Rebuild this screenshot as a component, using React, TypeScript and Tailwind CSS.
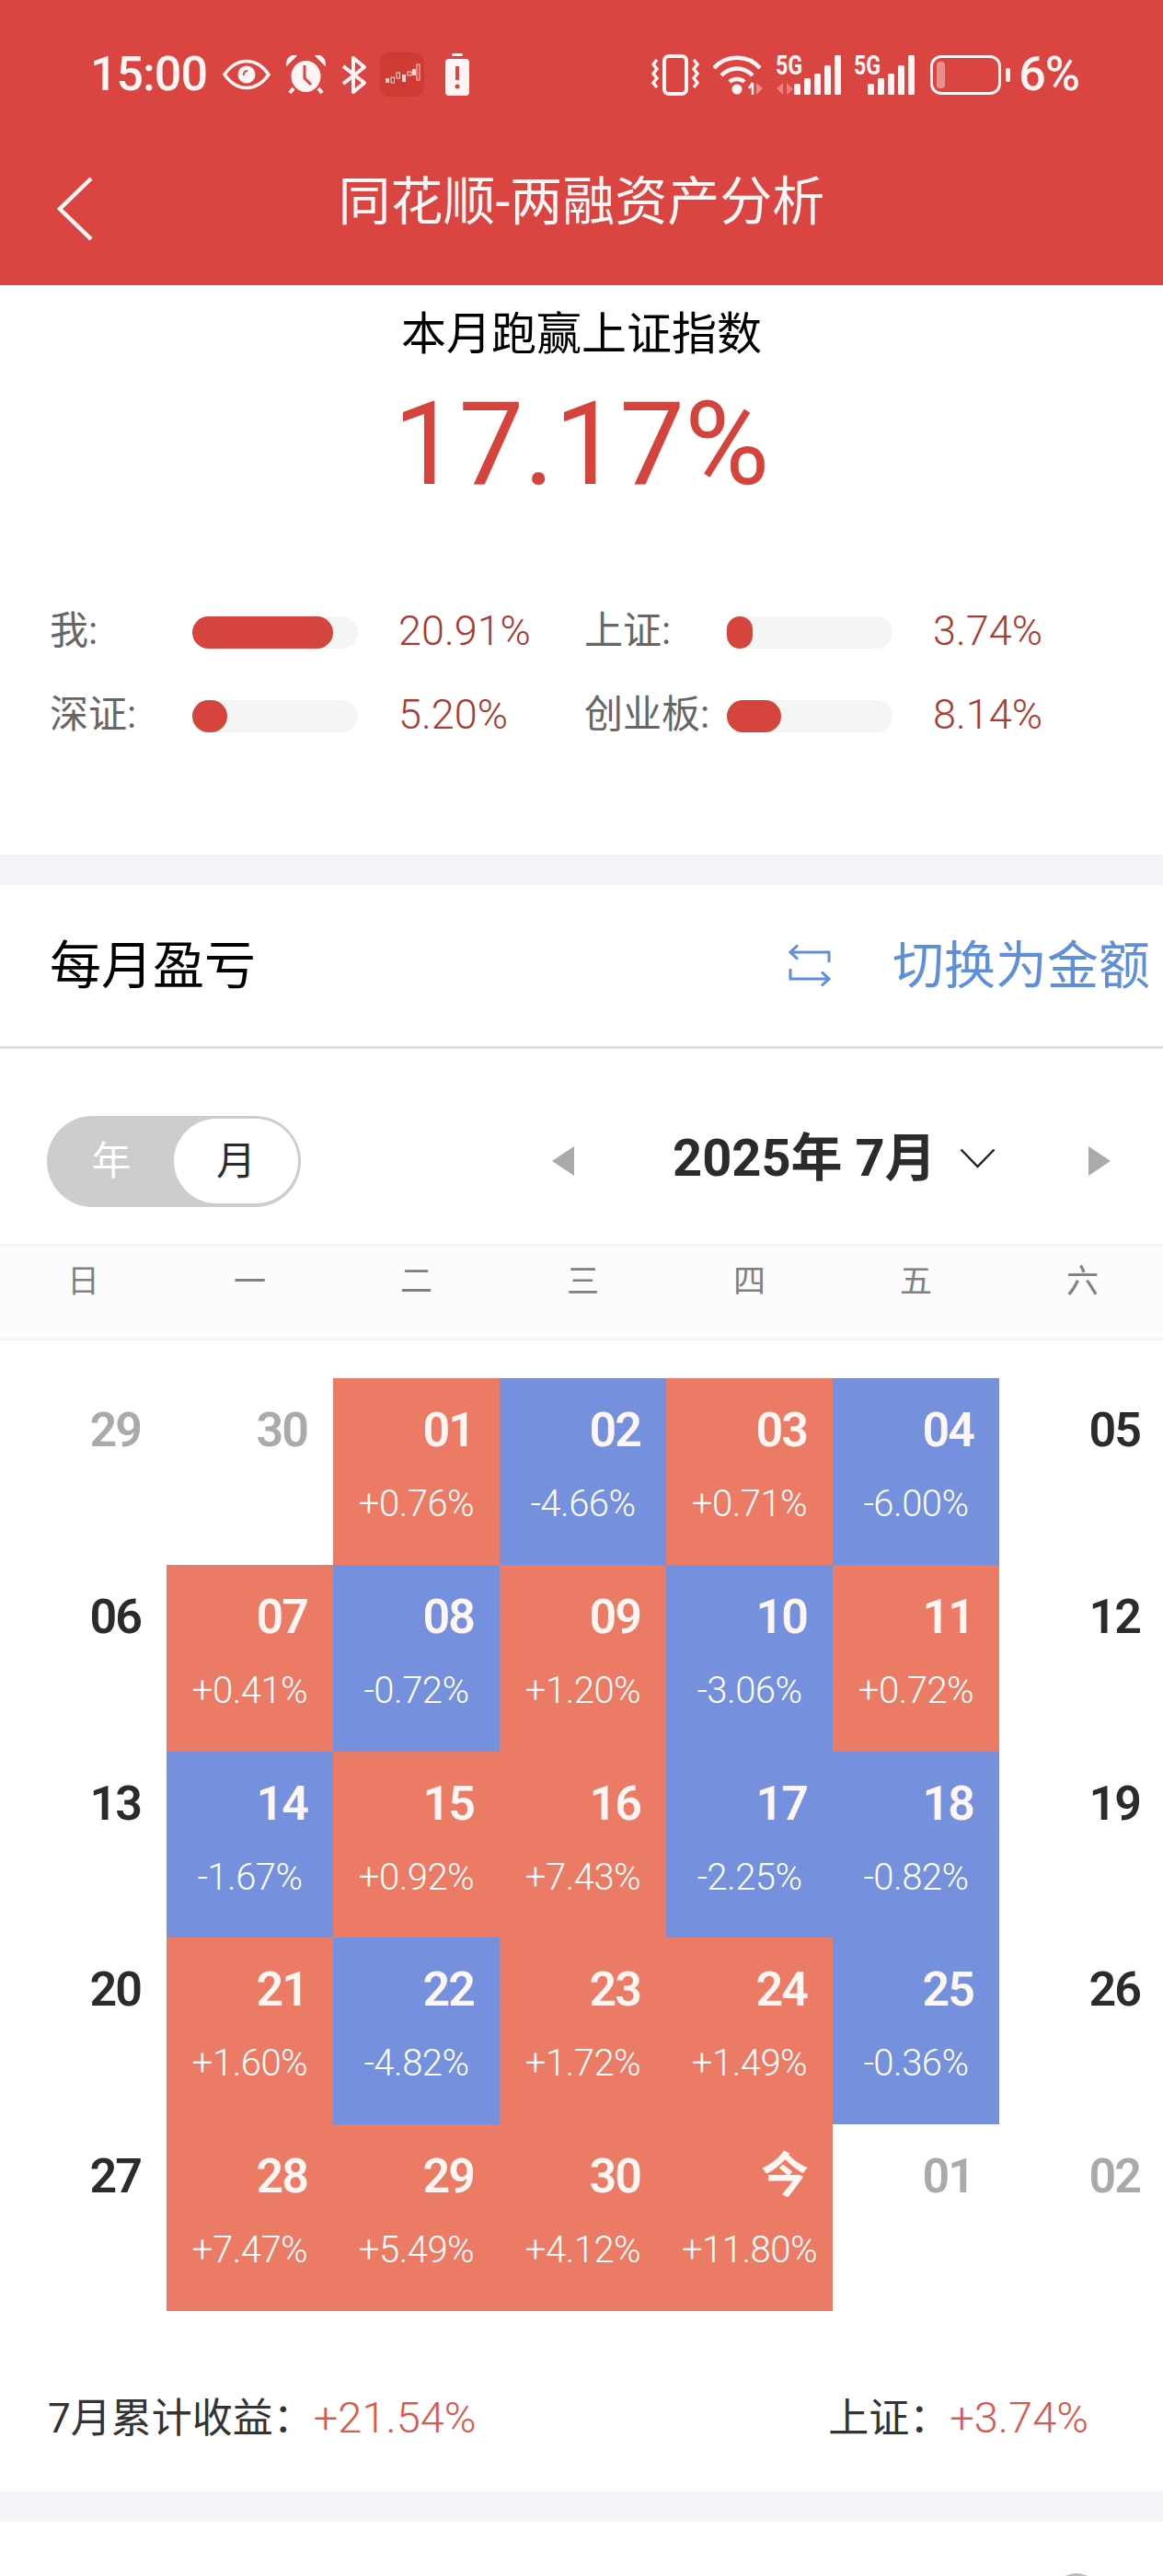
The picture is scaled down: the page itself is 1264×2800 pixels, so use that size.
import React from "react";

const FONT = "font-['Roboto','Noto_Sans_CJK_SC',sans-serif]";
const ICON = "#fff5f4";

type Cell = { day: string; pct?: string; tone: "up" | "down" | "none" | "muted" };

const c = (day: string, pct: string): Cell => ({
  day,
  pct,
  tone: pct.startsWith("+") ? "up" : "down",
});
const none = (day: string): Cell => ({ day, tone: "none" });
const muted = (day: string): Cell => ({ day, tone: "muted" });

const CELLS: Cell[] = [
  muted("29"), muted("30"), c("01", "+0.76%"), c("02", "-4.66%"), c("03", "+0.71%"), c("04", "-6.00%"), none("05"),
  none("06"), c("07", "+0.41%"), c("08", "-0.72%"), c("09", "+1.20%"), c("10", "-3.06%"), c("11", "+0.72%"), none("12"),
  none("13"), c("14", "-1.67%"), c("15", "+0.92%"), c("16", "+7.43%"), c("17", "-2.25%"), c("18", "-0.82%"), none("19"),
  none("20"), c("21", "+1.60%"), c("22", "-4.82%"), c("23", "+1.72%"), c("24", "+1.49%"), c("25", "-0.36%"), none("26"),
  none("27"), c("28", "+7.47%"), c("29", "+5.49%"), c("30", "+4.12%"), c("今", "+11.80%"), muted("01"), muted("02"),
];

const WEEK = ["日", "一", "二", "三", "四", "五", "六"];

function StatusLeft() {
  return (
    <div className="flex items-center">
      <span className="w-[126px] text-[52px] font-medium leading-none tracking-[-1px] text-[#fff5f4]">15:00</span>
      <svg className="ml-[18px]" width="52" height="34" viewBox="0 0 52 34" fill="none">
        <path d="M2 17C9 7 17 2.5 26 2.5S43 7 50 17C43 27 35 31.5 26 31.5S9 27 2 17Z" stroke={ICON} strokeWidth="3.5" />
        <circle cx="26" cy="17" r="9.5" fill={ICON} />
        <path d="M23 18a4 4 0 0 1 4-5" stroke="#db4541" strokeWidth="2" />
      </svg>
      <svg className="ml-[17px]" width="43" height="43" viewBox="0 0 43 43">
        <ellipse cx="21.5" cy="23" rx="16" ry="17" fill={ICON} />
        <path d="M1 10C1 4 5 0 10 1L1 10ZM42 10C42 4 38 0 33 1L42 10Z" fill={ICON} stroke={ICON} strokeWidth="2" />
        <path d="M20 11V25L27 32" stroke="#db4541" strokeWidth="3" fill="none" />
        <path d="M8 36L4 41M35 36L39 41" stroke={ICON} strokeWidth="4" />
      </svg>
      <svg className="ml-[16px]" width="29" height="43" viewBox="0 0 29 43" fill="none">
        <path d="M3 12L26 30L14 40V3L26 13L3 31" stroke={ICON} strokeWidth="4" strokeLinejoin="round" />
      </svg>
      <svg className="ml-[14px]" width="48" height="48" viewBox="0 0 48 48">
        <rect width="48" height="48" rx="11" fill="#cf3a33" />
        <rect x="6" y="28" width="4" height="5" fill="#f7d6d3" />
        <rect x="12" y="27" width="3.5" height="6" fill="none" stroke="#f7d6d3" strokeWidth="1" />
        <rect x="18" y="22" width="3.5" height="6" fill="none" stroke="#f7d6d3" strokeWidth="1" />
        <rect x="24" y="24" width="4" height="8" fill="#f7d6d3" />
        <rect x="30" y="21" width="4" height="4" fill="none" stroke="#f7d6d3" strokeWidth="1" />
        <rect x="35" y="18" width="4" height="7" fill="#f7d6d3" />
        <rect x="40" y="13" width="3" height="17" fill="none" stroke="#f7d6d3" strokeWidth="1" />
      </svg>
      <svg className="ml-[23px]" width="26" height="46" viewBox="0 0 26 46">
        <rect x="7" y="0" width="12" height="3" rx="1.5" fill={ICON} />
        <rect x="0" y="6" width="26" height="40" rx="4" fill={ICON} />
        <rect x="11" y="14" width="4" height="15" fill="#db4541" />
        <circle cx="13" cy="36" r="2.5" fill="#db4541" />
      </svg>
    </div>
  );
}

function Signal({ wide }: { wide?: boolean }) {
  return (
    <div className={`relative h-[43px] ${wide ? "w-[71px]" : "w-[66px]"}`}>
      <span className="absolute left-0 top-0 origin-left scale-x-80 text-[29px] font-bold leading-[22px] text-[#fff5f4]">5G</span>
      {wide && (
        <svg className="absolute bottom-0 left-[1px]" width="18" height="13" viewBox="0 0 18 13">
          <path d="M7 0V13L0 6ZM11 0V13L18 7Z" fill="#ee7f7a" />
        </svg>
      )}
      <svg className="absolute bottom-0 right-0" width="51" height="43" viewBox="0 0 51 43">
        <rect x="0" y="31" width="7" height="12" rx="1.5" fill={ICON} />
        <rect x="11" y="25" width="7" height="18" rx="1.5" fill={ICON} />
        <rect x="22" y="20" width="7" height="23" rx="1.5" fill={ICON} />
        <rect x="33" y="11" width="7" height="32" rx="1.5" fill={ICON} />
        <rect x="44" y="0" width="7" height="43" rx="1.5" fill={ICON} />
      </svg>
    </div>
  );
}

function StatusRight() {
  return (
    <div className="flex items-center">
      <svg width="52" height="45" viewBox="0 0 52 45" fill="none">
        <rect x="14" y="2" width="24" height="41" rx="5" stroke={ICON} strokeWidth="4" />
        <path d="M6 6L2 11L6 16L2 21L6 26L2 31L6 36" stroke={ICON} strokeWidth="3.5" />
        <path d="M46 6L50 11L46 16L50 21L46 26L50 31L46 36" stroke={ICON} strokeWidth="3.5" />
      </svg>
      <svg className="ml-[15px]" width="55" height="43" viewBox="0 0 55 43" fill="none">
        <path d="M1 14C14 -1 38 -1 51 14" stroke={ICON} strokeWidth="4.5" />
        <path d="M9 22C19 12 33 12 43 22" stroke={ICON} strokeWidth="4.5" />
        <circle cx="26" cy="37" r="5.5" fill={ICON} />
        <path d="M18 29C22 25 30 25 34 29" stroke={ICON} strokeWidth="4.5" />
        <path d="M43 30V43M43 30L39 36" stroke={ICON} strokeWidth="2.5" />
        <path d="M47 30V43L54 36Z" fill="#f08b85" />
      </svg>
      <div className="ml-[13px]"><Signal wide /></div>
      <div className="ml-[14px]"><Signal /></div>
      <div className="ml-[17px] flex h-[43px] w-[77px] items-center rounded-[12px] border-[3px] border-[#fff5f4] pl-[4px]">
        <div className="h-[29px] w-[9px] rounded-[4px] bg-[#ffffff66]" />
      </div>
      <div className="ml-[5px] h-[15px] w-[5px] rounded-[2px] bg-[#fff5f4]" />
      <span className="ml-[9px] text-[52px] font-medium leading-none tracking-[-1px] text-[#fff5f4]">6%</span>
    </div>
  );
}

function Bar({ label, pct, width }: { label: string; pct: string; width: number }) {
  return (
    <div className="flex h-[35px] items-center">
      <span className="w-[155px] shrink-0 whitespace-nowrap pb-[4px] text-[42px] leading-none text-[#666]">{label}</span>
      <div className="h-[35px] w-[180px] shrink-0 rounded-full bg-[#f4f6f6]">
        <div className="h-full rounded-full bg-[#d5453e]" style={{ width }} />
      </div>
      <span className="ml-[44px] pb-[4px] text-[45px] font-light leading-none text-[#a93a35]">{pct}</span>
    </div>
  );
}

function DayCell({ cell }: { cell: Cell }) {
  const bg = cell.tone === "up" ? "bg-[#ec7b66]" : cell.tone === "down" ? "bg-[#7591de]" : "";
  const dayColor =
    cell.tone === "muted" ? "text-[#aaa]" : cell.tone === "none" ? "text-[#2b2b2b]" : "text-[#fff5f2]";
  return (
    <div className={`h-[202.8px] pt-[27px] ${bg}`}>
      <div className={`pr-[28px] text-right text-[52px] font-semibold leading-[60px] tracking-[-2px] ${dayColor}`}>
        {cell.day}
      </div>
      {cell.pct && (
        <div className="mt-[30px] text-center text-[40px] font-light leading-[40px] tracking-[-0.5px] text-white">{cell.pct}</div>
      )}
    </div>
  );
}

export default function App() {
  return (
    <div className={`h-[2800px] w-[1264px] overflow-hidden bg-white ${FONT}`}>
      <header className="h-[310px] bg-[#db4541] text-white">
        <div className="flex h-[110px] items-end justify-between pb-[3px] pl-[98px] pr-[91px]">
          <StatusLeft />
          <StatusRight />
        </div>
        <div className="relative mt-[72px] text-center text-[57px] leading-[76px] text-[#fff7f6]">
          <svg className="absolute left-[60px] top-[9px]" width="44" height="72" viewBox="0 0 44 72" fill="none">
            <path d="M39 3L5 36L39 69" stroke="#fff7f6" strokeWidth="4.5" />
          </svg>
          同花顺-两融资产分析
        </div>
      </header>

      <section className="h-[619px] pt-[26px]">
        <div className="text-center text-[49px] leading-[56px] text-black">本月跑赢上证指数</div>
        <div className="mt-[26px] text-center text-[126px] font-normal leading-[130px] text-[#d4433c]">17.17%</div>
        <div className="mt-[122px] grid grid-cols-[581px_1fr] gap-y-[56px] pl-[54px]">
          <Bar label="我:" pct="20.91%" width={153} />
          <Bar label="上证:" pct="3.74%" width={28} />
          <Bar label="深证:" pct="5.20%" width={38} />
          <Bar label="创业板:" pct="8.14%" width={59} />
        </div>
      </section>

      <div className="h-[33px] bg-[#f2f4f7]" />

      <section>
        <div className="flex h-[178px] items-center justify-between border-b-[3px] border-[#dedede] pl-[54px] pr-[14px]">
          <span className="text-[56px] leading-none text-black">每月盈亏</span>
          <div className="flex items-center text-[56px] leading-none text-[#5f8fd9]">
            <svg className="mr-[67px]" width="46" height="47" viewBox="0 0 46 47" fill="none">
              <path d="M44 20V9H2M10 1.5L2 9L10 16.5" stroke="#5f8fd9" strokeWidth="3" />
              <path d="M2 27V38H44M36 30.5L44 38L36 45.5" stroke="#5f8fd9" strokeWidth="3" />
            </svg>
            切换为金额
          </div>
        </div>

        <div className="flex h-[212px] items-center pt-[32px]">
          <div className="ml-[51px] flex h-[99px] w-[276px] items-center rounded-full bg-[#cdcdcd] pr-[3px]">
            <span className="w-[138px] pl-[2px] text-center text-[43px] leading-none text-white">年</span>
            <span className="flex h-[92px] w-[135px] items-center justify-center rounded-full bg-white text-[43px] leading-none text-[#2b2b2b]">月</span>
          </div>
          <svg className="ml-[273px]" width="24" height="32" viewBox="0 0 24 32">
            <path d="M24 0V32L0 16Z" fill="#aaa" />
          </svg>
          <span className="ml-[107px] w-[280px] whitespace-nowrap pb-[6px] text-[56px] font-bold leading-none text-[#2b2b2b]">2025年 7月</span>
          <svg className="mb-[6px] ml-[32px]" width="39" height="22" viewBox="0 0 39 22" fill="none">
            <path d="M1.5 1.5L19.5 20L37.5 1.5" stroke="#222" strokeWidth="2.5" />
          </svg>
          <svg className="ml-[101px]" width="24" height="32" viewBox="0 0 24 32">
            <path d="M0 0V32L24 16Z" fill="#aaa" />
          </svg>
        </div>

        <div className="grid h-[105px] grid-cols-[repeat(7,181px)] border-y-[3px] border-[#f4f5f8] bg-[#fcfcfd] pt-[20px]">
          {WEEK.map((w) => (
            <span key={w} className="text-center text-[35px] leading-[38px] text-[#808080]">{w}</span>
          ))}
        </div>

        <div className="mt-[41px] grid grid-cols-[repeat(7,181px)]">
          {CELLS.map((cell, i) => (
            <DayCell key={i} cell={cell} />
          ))}
        </div>

        <div className="flex h-[196px] items-center justify-between pl-[52px] pr-[81px] pt-[36px] text-[44px] leading-none text-[#333]">
          <span>7月累计收益：<span className="text-[47px] font-light text-[#d9594e]">+21.54%</span></span>
          <span>上证：<span className="text-[47px] font-light text-[#d9594e]">+3.74%</span></span>
        </div>
      </section>

      <div className="h-[33px] bg-[#f2f4f7]" />

      <div className="flex justify-end pr-[69px] pt-[56px]">
        <div className="h-[50px] w-[50px] rounded-full bg-[#bbb]" />
      </div>
    </div>
  );
}
